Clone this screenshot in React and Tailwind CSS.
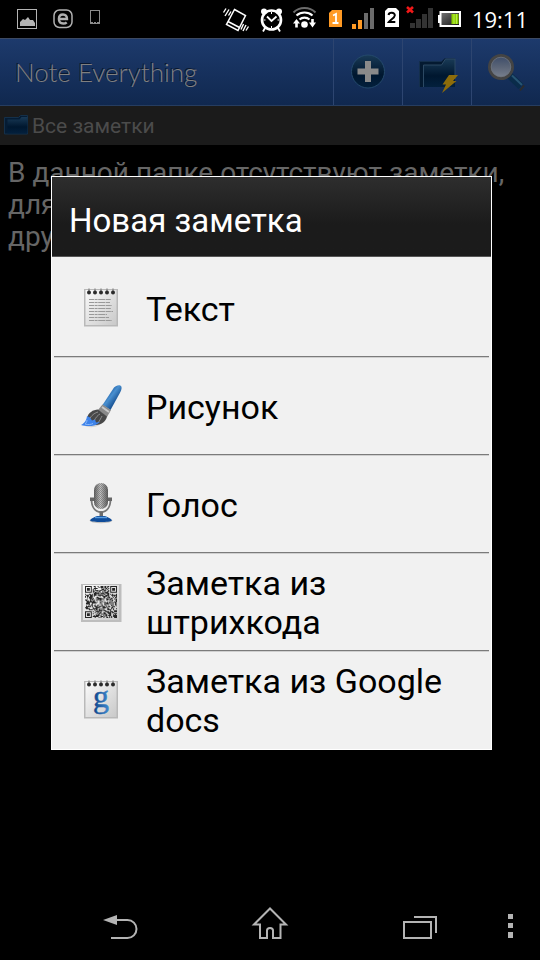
import React from "react";

const QR_SIZE = 33;

function isFinder(x, y) {
  const corners = [
    [0, 0],
    [QR_SIZE - 7, 0],
    [0, QR_SIZE - 7],
  ];
  for (const [cx, cy] of corners) {
    const dx = x - cx;
    const dy = y - cy;
    if (dx >= -1 && dx <= 7 && dy >= -1 && dy <= 7) {
      const ring = Math.max(Math.abs(dx - 3), Math.abs(dy - 3));
      return ring === 3 || ring <= 1 ? 1 : 0;
    }
  }
  return -1;
}

function qrPath() {
  let seed = 7;
  let d = "";
  for (let y = 0; y < QR_SIZE; y++) {
    for (let x = 0; x < QR_SIZE; x++) {
      seed = (seed * 1103515245 + 12345) % 2147483648;
      const f = isFinder(x, y);
      const on = f === -1 ? (seed >> 12) % 100 < 52 : f === 1;
      if (on) d += `M${x} ${y}h1v1h-1z`;
    }
  }
  return d;
}

const QR = qrPath();

function StatusIcons() {
  return (
    <>
      <div className="flex">
        <svg width="31" height="38" viewBox="14 0 31 38" aria-hidden="true">
          <rect x="17.5" y="9.5" width="19" height="19" fill="none" stroke="#b4b4b4" />
          <path d="M20 26v-4l3-3 2 1 3-3 2 3 3 0 2 3v3z" fill="#b4b4b4" />
        </svg>
        <svg width="40" height="38" viewBox="45 0 40 38" aria-hidden="true">
          <rect x="54" y="10" width="18" height="17.500" rx="5.500" fill="none" stroke="#b0b0b0" strokeWidth="1.500" />
          <path d="M59.500 19h7.500c0-3-1.600-4.500-4-4.500s-4.100 1.700-4.100 4.500 1.700 4.500 4.300 4.500c1.500 0 2.700-.4 3.500-1.200" fill="none" stroke="#b0b0b0" strokeWidth="2.400" />
        </svg>
        <svg width="24" height="38" viewBox="85 0 24 38" aria-hidden="true">
          <rect x="90.500" y="10.500" width="9" height="13" fill="none" stroke="#8d8d8d" />
          <path d="M91 22.500h8" stroke="#8d8d8d" strokeDasharray="2 1" />
        </svg>
      </div>
      <div className="flex">
        <svg width="36" height="38" viewBox="220 0 36 38" aria-hidden="true">
          <path d="M234.500 9.500 245.500 15.500 238 30.500 226.500 24.500zM228 21.500l11.500 6" fill="none" stroke="#fff" strokeWidth="1.500" />
          <path d="M226 8.500l-2.500 4M229 9.500l-4 6.500M231 11.500l-2.500 4M243.500 24l-2.500 5.500M246 25l-3 6M248.500 26.500l-2.500 4" stroke="#fff" strokeWidth="1.400" />
        </svg>
        <svg width="32" height="38" viewBox="256 0 32 38" aria-hidden="true">
          <circle cx="271.500" cy="20" r="9.500" fill="none" stroke="#fff" strokeWidth="2.600" />
          <circle cx="264" cy="11.500" r="3" fill="#fff" />
          <circle cx="279" cy="11.500" r="3" fill="#fff" />
          <path d="M267 16.500l4.500 4.500 5-4.500M265 28l-2 3.500M278 28l2 3.500" fill="none" stroke="#fff" strokeWidth="1.800" />
          <path d="M271.500 12v2M271.500 26v2M263.500 20h2M277.500 20h2" stroke="#fff" />
        </svg>
        <svg width="38" height="38" viewBox="288 0 38 38" aria-hidden="true">
          <path d="M293.500 12.500c6-6 16-6 22 0" fill="none" stroke="#6b6b6b" strokeWidth="2" />
          <path d="M296.500 15.500c4.500-4 11.500-4 16 0M299.500 19.500c2.700-2.400 7.300-2.400 10 0" fill="none" stroke="#fff" strokeWidth="2.200" />
          <circle cx="304.500" cy="24.500" r="3.300" fill="#fff" />
          <path d="M293 23.500l3.500-4.500 3.500 4.500h-2.200v4h-2.600v-4zM309 22.500h2.200v-3.500h2.600v3.500h2.200l-3.500 5z" fill="#fff" />
        </svg>
        <svg width="54" height="38" viewBox="326 0 54 38" aria-hidden="true">
          <path d="M332 10h10v17h-13V13z" fill="#ff9a24" />
          <path d="M333 15.500l3-1.500v9.500M332.500 23h6" fill="none" stroke="#fff" strokeWidth="1.800" />
          <path d="M352 24h4v5h-4zM358 20h4v9h-4z" fill="#ff9a24" />
          <path d="M364 13h4v16h-4zM370 8h4v21h-4z" fill="#6b6b6b" />
        </svg>
        <svg width="56" height="38" viewBox="380 0 56 38" aria-hidden="true">
          <path d="M388 8h8l3 3v16h-14V11z" fill="#fff" />
          <path d="M388.500 15c.5-3 6.500-3 6.300.5-.2 2.500-4.300 4-6 6.500h6.500" fill="none" stroke="#000" strokeWidth="2" />
          <path d="M407 7l6 5.500M413 7l-6 5.500" stroke="#f01818" strokeWidth="2.600" />
          <path d="M410 23h5v5h-5zM416 19h5v9h-5zM422 14h5v14h-5zM428 8h5v20h-5z" fill="#333" />
        </svg>
        <svg width="28" height="38" viewBox="436 0 28 38" aria-hidden="true">
          <defs>
            <linearGradient id="cell" x1="0" x2="1" y1="0" y2="1">
              <stop offset="0" stopColor="#777" />
              <stop offset="1" stopColor="#111" />
            </linearGradient>
          </defs>
          <rect x="440.500" y="12" width="19.500" height="14" fill="url(#cell)" stroke="#fff" strokeWidth="2" />
          <path d="M438 15h3v8h-3z" fill="#fff" />
          <path d="M451.500 14h7v10h-7z" fill="#8fd400" />
          <path d="M454 14v10M456.500 14v10" stroke="#d2f58c" strokeWidth=".6" />
        </svg>
      </div>
    </>
  );
}

function SharedDefs() {
  return (
    <svg width="0" height="0" className="absolute" aria-hidden="true">
      <defs>
        <linearGradient id="navy" x1="0" x2="0" y1="0" y2="1">
          <stop offset="0" stopColor="#193a56" />
          <stop offset=".6" stopColor="#00172f" />
          <stop offset="1" stopColor="#03203d" />
        </linearGradient>
        <linearGradient id="lens" x1="0" x2="0" y1="0" y2="1">
          <stop offset="0" stopColor="#3a4a68" />
          <stop offset=".5" stopColor="#5b6577" />
          <stop offset="1" stopColor="#7a8290" />
        </linearGradient>
        <linearGradient id="paper" x1="0" x2="1" y1="0" y2="1">
          <stop offset="0" stopColor="#fafafa" />
          <stop offset="1" stopColor="#c9c9c9" />
        </linearGradient>
        <linearGradient id="handle" x1="0" x2="1" y1="0" y2="1">
          <stop offset="0.2" stopColor="#0c4a94" />
          <stop offset=".45" stopColor="#4a90d0" />
          <stop offset=".75" stopColor="#0b4284" />
        </linearGradient>
        <linearGradient id="mic" x1="0" x2="1" y1="0" y2="0">
          <stop offset="0" stopColor="#5d5d5d" />
          <stop offset=".45" stopColor="#c4c4c4" />
          <stop offset="1" stopColor="#5a5a5a" />
        </linearGradient>
        <pattern id="mesh" width="2" height="2" patternUnits="userSpaceOnUse">
          <path d="M0 0h1v1h-1zM1 1h1v1h-1z" fill="#555" fillOpacity=".45" />
        </pattern>
        <linearGradient id="logo" x1="0" x2="1" y1="0" y2="0">
          <stop offset="0" stopColor="#0b3f86" />
          <stop offset="1" stopColor="#3f8bd0" />
        </linearGradient>
      </defs>
    </svg>
  );
}

function ToolButton({ label, children, viewBox }) {
  return (
    <button type="button" aria-label={label} className="h-full w-[69px] border-l border-[#2d4570]">
      <svg width="68" height="66" viewBox={viewBox} aria-hidden="true">
        {children}
      </svg>
    </button>
  );
}

function Rings() {
  return (
    <>
      {[12, 18, 24, 30, 36].map((x) => (
        <g key={x}>
          <path d={`M${x} 5.500v4`} stroke="#8a8a8a" strokeWidth="1.400" />
          <circle cx={x} cy="9.500" r="2" fill="#2b2b2b" />
        </g>
      ))}
    </>
  );
}

function Sheet() {
  return (
    <>
      <rect x="7" y="6" width="34" height="37.500" fill="#b9b9b9" />
      <rect x="8.500" y="7" width="31" height="35" fill="url(#paper)" />
      <Rings />
    </>
  );
}

function TextIcon() {
  const lines = [
    [16, 22],
    [19, 21],
    [22, 23],
    [25, 22],
    [28, 24],
    [31, 18],
    [34, 20],
    [37, 23],
  ];
  return (
    <>
      <Sheet />
      {lines.map(([y, w]) => (
        <path key={y} d={`M12 ${y}.500h${w}`} stroke="#999" strokeWidth="1.200" strokeDasharray="5 .6 3 .6 7 .6" />
      ))}
    </>
  );
}

function BrushIcon() {
  return (
    <>
      <path d="M8 45c8 3 16 0 19-6l-2-3z" fill="#000" fillOpacity=".12" />
      <path d="M37 6.500c2-2.500 7-3.500 7.500-.5.200 1.500-.1 3-1.100 5L33.500 29l-8-5z" fill="url(#handle)" />
      <path d="M25.500 23.500l8.500 5.500-4 7-9-7z" fill="#8a8a8a" />
      <path d="M25 26l7 5" stroke="#c8c8c8" strokeWidth="2" />
      <path d="M21 28.500l9 7c-1 5-6 9-12 8.500L10 37c1-5 6-8.500 11-8.500z" fill="#484848" />
      <path d="M13 37c3-4 5-5 8-6M17 40c2-4 4-6 6-7M21 42c2-3 3-5 4-7" fill="none" stroke="#8f8f8f" />
      <path d="M10 35c-.5 4-2 7-6 9 6 2 15 1.500 19-3l-4 .5-1-3-3 1-2-3z" fill="#3e83ea" />
      <path d="M10 39c0 2-1 3-2 4 3 1 6 .5 8-.5" fill="none" stroke="#8bb9fa" />
    </>
  );
}

function MicIcon() {
  return (
    <>
      <path d="M14.500 20c0 8 3.500 13 9.500 13s9.500-5 9.500-13" fill="none" stroke="#777" strokeWidth="1.800" />
      <path d="M13 18.500h5v3.500h-5zM30 18.500h5v3.500h-5z" fill="#666" />
      <rect x="17" y="4" width="14" height="26" rx="7" fill="url(#mic)" />
      <rect x="17" y="4" width="14" height="26" rx="7" fill="url(#mesh)" />
      <rect x="22.500" y="33" width="3.500" height="6" fill="#6c6c6c" />
      <ellipse cx="24" cy="41.500" rx="11.500" ry="2.800" fill="#000" fillOpacity=".2" />
      <path d="M13 41.500c1-2.500 4-3 7-4.500h8c3 1.500 6 2 7 4.500-2 2-20 2-22 0z" fill="#0f4c9a" />
      <path d="M18 38.500h12" stroke="#5a9ee0" strokeWidth="1.400" />
    </>
  );
}

function QrIcon() {
  return (
    <>
      <rect x="4" y="7" width="40.500" height="38" fill="#bdbdbd" />
      <rect x="6" y="8" width="36" height="35" fill="url(#paper)" />
      <g transform="translate(8 9) scale(.97)">
        <path d={QR} fill="#262626" />
      </g>
    </>
  );
}

function DocsIcon() {
  return (
    <>
      <Sheet />
      <text x="24" y="32" textAnchor="middle" fontFamily="'Liberation Serif', serif" fontSize="32" fill="url(#logo)" stroke="url(#logo)" strokeWidth=".5">
        g
      </text>
    </>
  );
}

const ITEMS = [
  { label: "Текст", Icon: TextIcon },
  { label: "Рисунок", Icon: BrushIcon },
  { label: "Голос", Icon: MicIcon },
  { label: "Заметка из штрихкода", Icon: QrIcon },
  { label: "Заметка из Google docs", Icon: DocsIcon },
];

function NewNoteDialog() {
  return (
    <div className="absolute inset-0 flex items-center pr-12 pl-[51px]">
      <div role="dialog" aria-modal="true" aria-labelledby="dialog-title" className="w-full border border-white bg-[#f1f1f1]">
        <div className="border-b border-[#555] bg-[#1b1b1b]">
          <h2 id="dialog-title" className="flex h-[79px] items-center bg-linear-to-b from-[#2e2e2e] to-[#1b1b1b] to-60% px-[17px] pt-2 text-[33px] text-white">
            Новая заметка
          </h2>
        </div>
        <ul className="px-0.5 pt-0.5">
          {ITEMS.map(({ label, Icon }) => (
            <li key={label} className="border-b border-[#7b7b7b] shadow-[0_1px_0_#d0d0d0] last:border-transparent last:shadow-none">
              <button type="button" className="flex h-[97px] w-full items-center gap-[21px] pr-4 pl-[23px] text-left text-[34px] leading-[39px] text-black">
                <svg width="48" height="48" viewBox="0 1 48 48" className="shrink-0" aria-hidden="true">
                  <Icon />
                </svg>
                <span className="pt-[3px]">{label}</span>
              </button>
            </li>
          ))}
        </ul>
      </div>
    </div>
  );
}

function NavBar() {
  return (
    <nav className="flex h-[72px] pr-[15px] pl-[45px] text-[#b4b4b4]">
      <button type="button" aria-label="Назад" className="flex flex-1 justify-center">
        <svg width="40" height="72" viewBox="100 888 40 72" aria-hidden="true">
          <path d="M103 920l14-5v10z" fill="currentColor" />
          <path d="M116 920h11.500a9 9 0 0 1 0 18H111" fill="none" stroke="currentColor" strokeWidth="2" />
        </svg>
      </button>
      <button type="button" aria-label="Домой" className="flex flex-1 justify-center">
        <svg width="40" height="72" viewBox="250 888 40 72" aria-hidden="true">
          <path d="M254 924.500l16-16 16 16h-5.500V938H273v-7.500c0-3.500-6-3.500-6 0V938h-7v-13.500z" fill="none" stroke="currentColor" strokeWidth="2" />
        </svg>
      </button>
      <button type="button" aria-label="Недавние" className="flex flex-1 justify-center">
        <svg width="40" height="72" viewBox="400 888 40 72" aria-hidden="true">
          <path d="M404 922h27v16h-27zM414 917h22v16" fill="none" stroke="currentColor" strokeWidth="2" />
        </svg>
      </button>
      <button type="button" aria-label="Меню" className="flex w-[30px] justify-center">
        <svg width="30" height="72" viewBox="495 888 30 72" aria-hidden="true">
          <path d="M508 914h5v5h-5zM508 923h5v5h-5zM508 932h5v6h-5z" fill="currentColor" />
        </svg>
      </button>
    </nav>
  );
}

export default function App() {
  return (
    <div className="flex min-h-screen flex-col bg-black font-[Roboto,sans-serif]">
      <SharedDefs />
      <div className="flex h-[38px] items-center pr-3 pl-[14px]">
        <div className="flex flex-1 justify-between pr-2">
          <StatusIcons />
        </div>
        <time className="font-['Open_Sans',sans-serif] text-[22px] text-white">19:11</time>
      </div>
      <div className="relative flex flex-1 flex-col">
        <header className="flex h-[68px] items-center border-t border-b border-t-[#3d4a63] border-b-[#263d60] bg-linear-to-b from-[#1d3a6c] to-[#10284f]">
          <h1 className="flex-1 pl-[15px] font-[Lato,sans-serif] text-[26px] font-light text-[#808080] [text-shadow:-1px_-1px_0_#0a1830]">
            Note Everything
          </h1>
          <ToolButton label="Новая заметка" viewBox="334 39 68 66">
            <circle cx="368" cy="71.500" r="16.500" fill="url(#navy)" stroke="#24496c" />
            <path d="M365 61h6v7.500h7.500v6H371V82h-6v-7.500h-7.500v-6h7.500z" fill="#8a8a8a" />
          </ToolButton>
          <ToolButton label="Новая папка" viewBox="403 39 68 66">
            <path d="M419.500 61.500h22l3-3h10.500v28.500h-35.500z" fill="#041a31" />
            <path d="M419.500 87v-25.500h22" fill="none" stroke="#142f4c" />
            <path d="M423.500 87v-22h18l4-6h9.500v28z" fill="url(#navy)" />
            <path d="M423.500 87v-22h18l4-6h9.500v20" fill="none" stroke="#2c4963" />
            <path d="M449 75h9l-5 6h3.500L442 93l4-8.500h-3.500z" fill="#8d6c0a" />
          </ToolButton>
          <ToolButton label="Поиск" viewBox="472 39 68 66">
            <path d="M509.500 75.500l11.500 11" stroke="#0a2c4a" strokeWidth="7" />
            <path d="M512 75.500l10 9.500" stroke="#275473" strokeWidth="2" />
            <path d="M520 90.500l4-5" stroke="#2c2c2c" strokeWidth="2" />
            <circle cx="501" cy="67" r="11.500" fill="url(#lens)" stroke="#444" strokeWidth="3" />
            <circle cx="501" cy="67" r="9.800" fill="none" stroke="#6f757e" strokeWidth=".8" />
          </ToolButton>
        </header>
        <div className="flex h-[39px] items-center bg-[#1b1b1b] pt-0.5 pl-1 text-[21px] text-[#4b4b4b]">
          <svg width="28" height="37" viewBox="4 108 28 37" aria-hidden="true">
            <path d="M4.500 117.500h14l2-2H27.500v18.500H4.500z" fill="#051c34" stroke="#14304a" />
            <path d="M7.500 119.500h12l2-2.500h6v16.500H7.500z" fill="url(#navy)" />
          </svg>
          <span>Все заметки</span>
        </div>
        <main className="flex-1 px-2 pt-3 text-[28px] leading-8 text-[#666]">
          <p>
            В данной папке отсутствуют заметки,
            <br />
            для
            <br />
            дру
          </p>
        </main>
        <NewNoteDialog />
      </div>
      <NavBar />
    </div>
  );
}
